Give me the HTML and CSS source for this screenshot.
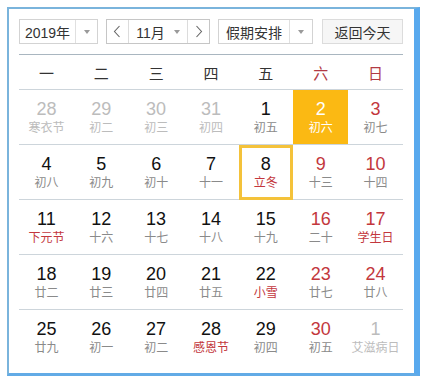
FILE: index.html
```html
<!DOCTYPE html>
<html lang="zh-CN">
<head>
    <meta charset="UTF-8">
    <meta name="viewport" content="width=device-width, initial-scale=1.0">
    <title>万年历</title>
    <link rel="stylesheet" href="styles.css">
</head>
<body>
    <div class="calendar">
        <div class="toolbar">
            <div class="select year">
                <span class="label">2019年</span>
                <span class="drop"><i class="caret"></i></span>
            </div>
            <div class="month-group">
                <span class="nav">
                    <svg width="8" height="13" viewBox="0 0 8 13"><polyline points="6.5,1 1.5,6.5 6.5,12" fill="none" stroke="#666" stroke-width="1.1"/></svg>
                </span>
                <span class="month">11月<i class="caret"></i></span>
                <span class="nav">
                    <svg width="8" height="13" viewBox="0 0 8 13"><polyline points="1.5,1 6.5,6.5 1.5,12" fill="none" stroke="#666" stroke-width="1.1"/></svg>
                </span>
            </div>
            <div class="select holiday">
                <span class="label">假期安排</span>
                <span class="drop"><i class="caret"></i></span>
            </div>
            <button class="today-btn">返回今天</button>
        </div>

        <div class="weekdays">
            <span>一</span><span>二</span><span>三</span><span>四</span><span>五</span>
            <span class="weekend">六</span><span class="weekend">日</span>
        </div>

        <div class="week">
            <div class="day other"><b>28</b><small>寒衣节</small></div>
            <div class="day other"><b>29</b><small>初二</small></div>
            <div class="day other"><b>30</b><small>初三</small></div>
            <div class="day other"><b>31</b><small>初四</small></div>
            <div class="day"><b>1</b><small>初五</small></div>
            <div class="day weekend selected"><b>2</b><small>初六</small></div>
            <div class="day weekend"><b>3</b><small>初七</small></div>
        </div>
        <div class="week">
            <div class="day"><b>4</b><small>初八</small></div>
            <div class="day"><b>5</b><small>初九</small></div>
            <div class="day"><b>6</b><small>初十</small></div>
            <div class="day"><b>7</b><small>十一</small></div>
            <div class="day today"><b>8</b><small class="fest">立冬</small></div>
            <div class="day weekend"><b>9</b><small>十三</small></div>
            <div class="day weekend"><b>10</b><small>十四</small></div>
        </div>
        <div class="week">
            <div class="day"><b>11</b><small class="fest">下元节</small></div>
            <div class="day"><b>12</b><small>十六</small></div>
            <div class="day"><b>13</b><small>十七</small></div>
            <div class="day"><b>14</b><small>十八</small></div>
            <div class="day"><b>15</b><small>十九</small></div>
            <div class="day weekend"><b>16</b><small>二十</small></div>
            <div class="day weekend"><b>17</b><small class="fest">学生日</small></div>
        </div>
        <div class="week">
            <div class="day"><b>18</b><small>廿二</small></div>
            <div class="day"><b>19</b><small>廿三</small></div>
            <div class="day"><b>20</b><small>廿四</small></div>
            <div class="day"><b>21</b><small>廿五</small></div>
            <div class="day"><b>22</b><small class="fest">小雪</small></div>
            <div class="day weekend"><b>23</b><small>廿七</small></div>
            <div class="day weekend"><b>24</b><small>廿八</small></div>
        </div>
        <div class="week">
            <div class="day"><b>25</b><small>廿九</small></div>
            <div class="day"><b>26</b><small>初一</small></div>
            <div class="day"><b>27</b><small>初二</small></div>
            <div class="day"><b>28</b><small class="fest">感恩节</small></div>
            <div class="day"><b>29</b><small>初四</small></div>
            <div class="day weekend"><b>30</b><small>初五</small></div>
            <div class="day other"><b>1</b><small>艾滋病日</small></div>
        </div>
    </div>
</body>
</html>
```

FILE: styles.css
```css
body {
  margin: 7px 0 0 7px;
  background: #fff;
  font-family: "Liberation Sans", "Noto Sans CJK SC", sans-serif;
  color: #222;
}

.calendar {
  width: 384px;
  padding: 10px 11px 9px 10px;
  border: 2px solid #7ab4dc;
  border-right: 6px solid #58a9ee;
  border-bottom: 3px solid #62abe6;
  background: #fff;
}

/* toolbar */
.toolbar {
  display: flex;
  height: 25px;
  padding-bottom: 10px;
  border-bottom: 1px solid #a9b6c0;
  font-size: 14px;
  color: #333;
}

.select {
  display: flex;
  box-sizing: border-box;
  height: 25px;
  border: 1px solid #d3d3d3;
  background: #fff;
}

.select .label {
  display: flex;
  align-items: center;
  justify-content: center;
  border-right: 1px solid #e0e0e0;
}

.select .drop {
  display: flex;
  align-items: center;
  justify-content: center;
  flex: 1;
}

.year {
  width: 79px;
}

.year .label {
  width: 55px;
}

.holiday {
  width: 95px;
  margin-left: 8px;
}

.holiday .label {
  width: 70px;
}

.caret {
  display: inline-block;
  width: 0;
  height: 0;
  border-top: 4px solid #9a9a9a;
  border-left: 3.5px solid transparent;
  border-right: 3.5px solid transparent;
}

.month-group {
  display: flex;
  box-sizing: border-box;
  width: 104px;
  height: 25px;
  margin-left: 8px;
  border: 1px solid #c6c6c6;
  background: #fff;
}

.month-group .nav {
  display: flex;
  align-items: center;
  justify-content: center;
  width: 21px;
}

.month-group .month {
  display: flex;
  align-items: center;
  justify-content: center;
  gap: 9px;
  width: 60px;
  border-left: 1px solid #dcdcdc;
  border-right: 1px solid #dcdcdc;
}

.today-btn {
  box-sizing: border-box;
  width: 81px;
  height: 25px;
  margin-left: 9px;
  padding: 0;
  border: 1px solid #dcdcdc;
  background: #f6f6f6;
  font-family: inherit;
  font-size: 14px;
  color: #333;
}

/* grid */
.weekdays,
.week {
  display: grid;
  grid-template-columns: repeat(7, 1fr);
  border-bottom: 1px solid #cdd5db;
}

.weekdays {
  height: 34px;
  align-items: center;
  text-align: center;
  font-size: 15px;
  color: #333;
}

.weekdays .weekend {
  color: #b23a44;
}

.week:last-child {
  border-bottom: none;
}

.day {
  position: relative;
  height: 54px;
  box-sizing: border-box;
  padding-top: 9px;
  text-align: center;
}

.day b {
  display: block;
  font-weight: normal;
  font-size: 18px;
  line-height: 20px;
  color: #111;
}

.day small {
  display: block;
  font-size: 12px;
  line-height: 18px;
  color: #8a8a8a;
}

.day.weekend b {
  color: #c3373d;
}

.day small.fest {
  color: #c3373d;
}

.day.other b,
.day.other small {
  color: #bcbcbc;
}

.day.selected {
  background: #fbb913;
}

.day.selected b,
.day.selected small {
  color: #fff;
}

.day.today::after {
  content: "";
  position: absolute;
  top: 0;
  left: 1px;
  right: 0;
  bottom: -1px;
  border: 3px solid #f4c23a;
}
```
